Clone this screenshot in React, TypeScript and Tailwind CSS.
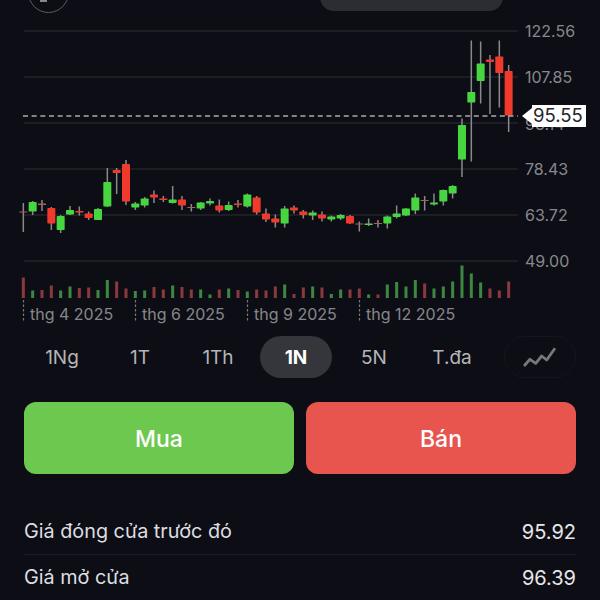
const FONT = "font-['Inter','Noto_Sans',sans-serif]";

// [wickTop, wickBottom, bodyTop, bodyBottom, colour]; u = up, d = down, f = faded doji
type Candle = [number, number, number, number, "u" | "d" | "f"];

const candles: Candle[] = [
  [203, 232, 211.5, 212.5, "f"],
  [201, 215, 202, 211.5, "u"],
  [200, 211, 203.5, 205, "f"],
  [207, 230, 208, 223.5, "d"],
  [215, 233, 216, 230, "u"],
  [206, 215, 210, 214.5, "u"],
  [206.5, 215.5, 211, 212.5, "d"],
  [211.5, 220, 213.5, 218, "d"],
  [208, 220, 209, 220, "u"],
  [168, 207, 182, 206.5, "u"],
  [168, 194, 170, 173, "d"],
  [160, 205, 164, 201.5, "d"],
  [202, 210, 203.5, 207.5, "u"],
  [197, 207.5, 198.5, 205.5, "u"],
  [190.5, 203, 194.5, 197.5, "d"],
  [196, 202, 198.5, 200, "d"],
  [186, 203.5, 199.5, 203, "u"],
  [196, 210, 199.5, 205.5, "d"],
  [204, 211.5, 207, 208, "f"],
  [202, 210, 202.5, 208.5, "u"],
  [198.5, 205.5, 201, 203.5, "u"],
  [199.5, 212.5, 205.5, 210.5, "d"],
  [201.5, 211, 205, 210, "u"],
  [200, 207.5, 203.5, 205, "d"],
  [193.5, 207.5, 194.5, 206.5, "u"],
  [196, 214.5, 197.5, 212.5, "d"],
  [208.5, 222, 213.5, 219.5, "d"],
  [214.5, 227.5, 218.5, 222.5, "d"],
  [206, 227.5, 208.5, 223.5, "u"],
  [205.5, 213.5, 207.5, 210.5, "d"],
  [210, 218.5, 211.5, 215, "d"],
  [210.5, 220, 212.5, 215.5, "u"],
  [211.5, 221.5, 214.5, 218.5, "d"],
  [215.5, 221.5, 216.5, 219.5, "u"],
  [214, 220, 215, 218.5, "u"],
  [215, 224, 216, 223.5, "d"],
  [221.5, 231.5, 223.5, 224.5, "f"],
  [218.5, 226, 223.5, 225, "u"],
  [220, 227.5, 223, 224, "f"],
  [215.5, 228.5, 216.5, 223.5, "u"],
  [205.5, 218.5, 213.5, 217, "u"],
  [208, 216, 208.5, 215.5, "u"],
  [193.5, 214, 197.5, 210.5, "u"],
  [196, 210.5, 200, 201, "f"],
  [193.5, 205.5, 202.5, 204.5, "u"],
  [189.5, 205.5, 190, 201.5, "u"],
  [185, 198.5, 186, 193.5, "u"],
  [118.5, 177, 125, 159.5, "u"],
  [40.5, 161.5, 92, 102.5, "u"],
  [41.5, 103.5, 63.5, 81, "u"],
  [55, 114, 59.5, 62, "d"],
  [40.5, 107.5, 56.5, 73, "d"],
  [65, 132, 71, 115.5, "d"],
];

// Volume heights, same order as the candles; colour follows the candle direction
const volumes = [
  20.5, 7.5, 8, 12.5, 7.5, 11.5, 10, 10.5, 8, 18, 16.5, 9.5, 7, 7.5, 11, 8.5, 12.5, 11, 8.5, 8.5, 3.5, 8.5,
  9.5, 8, 6.5, 8.5, 7.5, 11.5, 13.5, 4, 10.5, 11.5, 10.5, 4, 8.5, 8.5, 9.5, 3.5, 3.5, 13.5, 16, 11.5, 18,
  14.5, 9.5, 11.5, 16.5, 32.5, 24.5, 15.5, 9.5, 7.5, 16.5,
];

const volumeDown = new Set([0, 2, 3, 6, 7, 10, 11, 14, 15, 17, 18, 21, 23, 25, 26, 27, 29, 30, 32, 35, 36, 38, 43, 50, 51, 52]);

const gridLines = [31, 77, 123, 169, 215, 261];
const ticks = [23.5, 135.5, 247.5, 359.5];

// Chart svg starts 13px down the page, labels below are positioned inside it
const priceLabels = [
  { text: "122.56", top: 8 },
  { text: "107.85", top: 54 },
  { text: "93.14", top: 101 },
  { text: "78.43", top: 146 },
  { text: "63.72", top: 192 },
  { text: "49.00", top: 238 },
];

const dateLabels = [
  { text: "thg 4 2025", x: 30 },
  { text: "thg 6 2025", x: 142 },
  { text: "thg 9 2025", x: 254 },
  { text: "thg 12 2025", x: 366 },
];

const ranges = ["1Ng", "1T", "1Th", "1N", "5N", "T.đa"];

function candleX(i: number) {
  return 23.33 + i * 9.333;
}

function Chart() {
  return (
    <div className="relative h-[311px]">
      <svg width="600" height="311" viewBox="0 13 600 311" className="block">
        {gridLines.map((y) => (
          <line key={y} x1="24" x2="518" y1={y} y2={y} stroke="#232429" strokeWidth="1.4" />
        ))}
        {ticks.map((x) => (
          <line key={x} x1={x} x2={x} y1="300" y2="321" stroke="#77787c" strokeWidth="1.2" strokeDasharray="2.5 2" />
        ))}
        {volumes.map((h, i) => (
          <rect
            key={i}
            x={candleX(i) - 1.5}
            y={298 - h}
            width="3"
            height={h}
            fill={volumeDown.has(i) ? "#8a3a3c" : "#3d8840"}
          />
        ))}
        {candles.map(([top, bottom, bodyTop, bodyBottom, kind], i) => {
          const x = candleX(i);
          const isDoji = bodyBottom - bodyTop < 2;
          const fill = kind === "u" ? "#46d63f" : kind === "d" ? "#f23a2c" : "#a8605a";
          return (
            <g key={i}>
              <line x1={x} x2={x} y1={top} y2={bottom} stroke="#8a8a8a" strokeWidth="1.5" />
              <rect x={x - 4} y={bodyTop} width="8" height={bodyBottom - bodyTop} fill={fill} rx={isDoji ? 0 : 0.8} />
            </g>
          );
        })}
        <line x1="23" x2="518" y1="116" y2="116" stroke="#ababad" strokeWidth="1.6" strokeDasharray="5 3.67" />
      </svg>

      {priceLabels.map((label) => (
        <span
          key={label.text}
          className="absolute left-[525px] text-[16px] leading-[20px] text-[#87888c]"
          style={{ top: label.top }}
        >
          {label.text}
        </span>
      ))}

      {dateLabels.map((label) => (
        <span
          key={label.text}
          className="absolute top-[290px] text-[16px] leading-[22px] text-[#86878b]"
          style={{ left: label.x }}
        >
          {label.text}
        </span>
      ))}

      {/* current price tag */}
      <div className="absolute left-[522px] top-[92px] flex h-[22px] items-center">
        <div className="h-0 w-0 border-y-[8px] border-r-[10px] border-y-transparent border-r-white" />
        <div className="flex h-[22px] w-[54px] items-center pl-[1px] bg-white text-[18.5px] text-[#26262a]">95.55</div>
      </div>
    </div>
  );
}

function RangeTabs() {
  return (
    <div className="mt-[12px] flex items-center pl-[26px]">
      <div className="flex gap-[6px]">
        {ranges.map((range) => (
          <div
            key={range}
            className={
              range === "1N"
                ? "flex h-[42px] w-[72px] items-center justify-center rounded-full bg-[#35363c] pt-[2px] text-[19px] font-bold text-white"
                : "flex h-[42px] w-[72px] items-center justify-center pt-[2px] text-[19px] text-[#b4b5b8]"
            }
          >
            {range}
          </div>
        ))}
      </div>
      <div className="ml-[16px] flex h-[42px] w-[72px] items-center justify-center rounded-full border border-[#15161c]">
        <svg width="34" height="24" viewBox="0 0 34 24" fill="none" stroke="#77787c" strokeWidth="2.8" strokeLinejoin="round">
          <polyline points="1,21 7,14.3 12.7,18.3 18.7,11 23.7,15 32,3.3" />
        </svg>
      </div>
    </div>
  );
}

function StatRow({ label, value, divider }: { label: string; value: string; divider?: boolean }) {
  return (
    <div className={`flex h-[45px] items-center justify-between ${divider ? "border-b border-[#1a1b21]" : ""}`}>
      <span className="text-[19.8px] text-[#dedee0]">{label}</span>
      <span className="text-[20px] text-[#e6e6e8]">{value}</span>
    </div>
  );
}

export default function App() {
  return (
    <div className={`h-[600px] w-[600px] overflow-hidden bg-[#0d0e15] ${FONT}`}>
      <div className="flex h-[13px] items-end justify-between pl-[28px] pr-[97px]">
        <div className="flex h-[41px] w-[41px] shrink-0 items-end justify-center rounded-full border-[1.5px] border-[#5c5d61] pb-[10px] pr-[10px]">
          <div className="h-[2px] w-[7px] bg-[#85868a]" />
        </div>
        <div className="mb-[2px] h-[40px] w-[183px] shrink-0 rounded-[14px] bg-[#2c2d33]" />
      </div>

      <Chart />
      <RangeTabs />

      <div className="mt-[24px] flex h-[72px] gap-[12px] px-[24px]">
        <button className="flex-1 rounded-[12px] bg-[#6cc84f] pt-[2px] text-[23px] font-medium text-white">Mua</button>
        <button className="flex-1 rounded-[12px] bg-[#e8554f] pt-[2px] text-[23px] font-medium text-white">Bán</button>
      </div>

      <div className="mt-[36px] px-[24px]">
        <StatRow label="Giá đóng cửa trước đó" value="95.92" divider />
        <StatRow label="Giá mở cửa" value="96.39" />
      </div>
    </div>
  );
}
